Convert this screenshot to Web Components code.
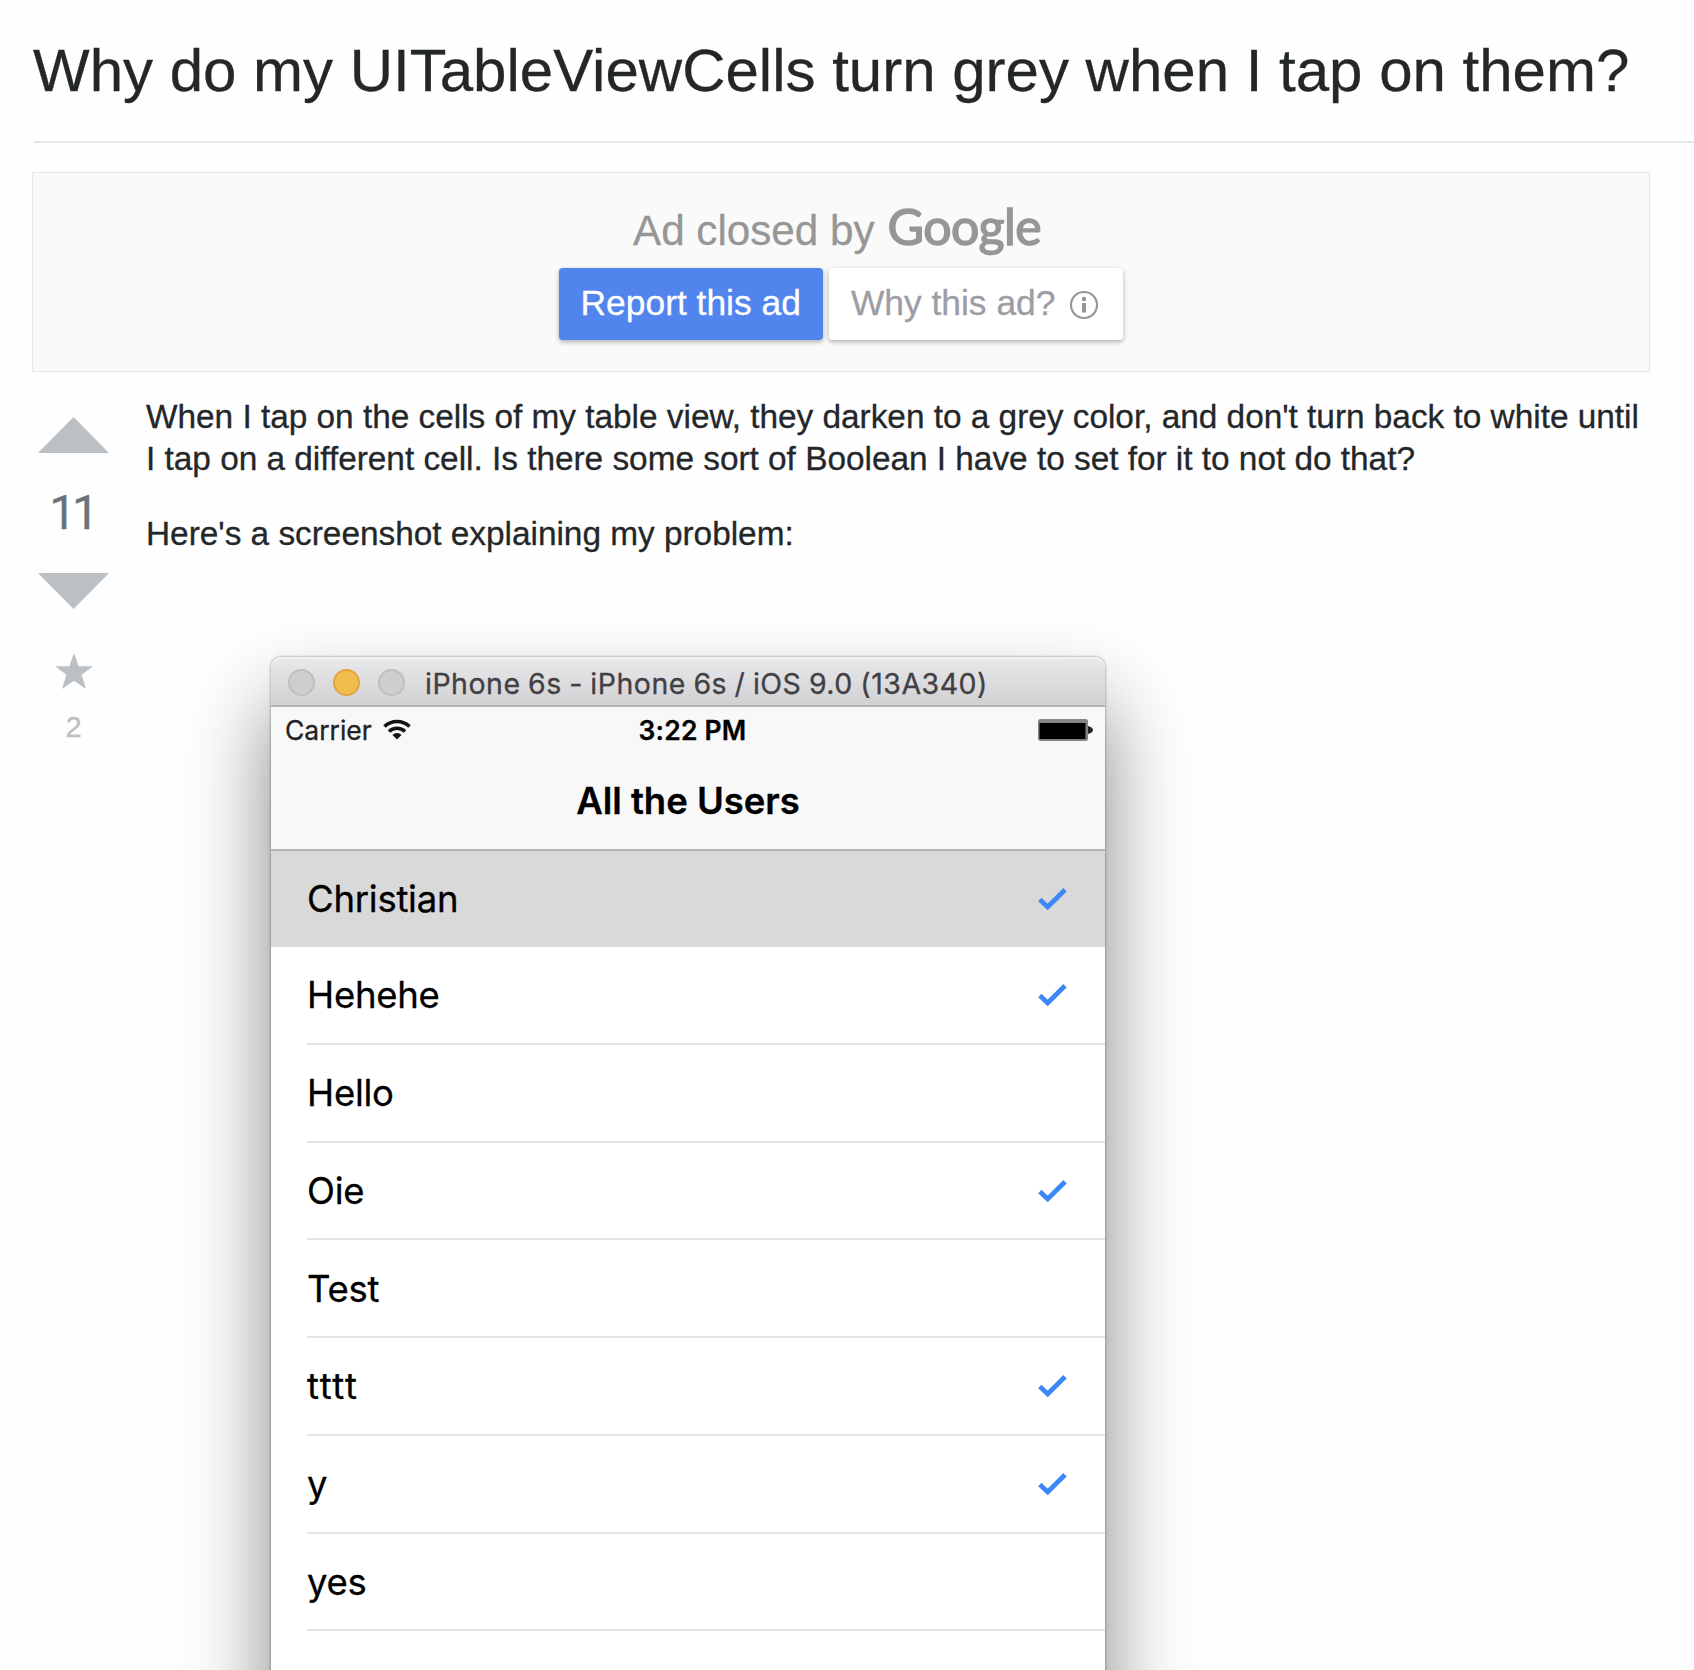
<!DOCTYPE html>
<html lang="en">
<head>
<meta charset="utf-8">
<title>Why do my UITableViewCells turn grey when I tap on them?</title>
<style>
html, body {
  margin: 0;
  height: 1670px;
  overflow: hidden;
  background: #fefefe;
}
body {
  font-family: "Liberation Sans", Arial, sans-serif;
  color: #242729;
  -webkit-text-stroke: .3px;
}
.wide {
  letter-spacing: 1.6px;
}
</style>
</head>
<body>

<question-page>
  <span slot="title">Why do my UITableViewCells turn grey when I tap on them?</span>
  <closed-ad slot="ad"></closed-ad>
  <vote-cell slot="votes" score="11" favorites="2"></vote-cell>
  <post-text slot="post">
    <p>When I tap on the cells of my table view, they darken to a grey color, and don't turn back to white until<br>I tap on a different cell. Is there some sort of Boolean I have to set for it to not do that?</p>
    <p>Here's a screenshot explaining my problem:</p>
    <simulator-window slot="figure" label="iPhone 6s - iPhone 6s / iOS 9.0 (13A340)">
      <status-bar carrier="Carrier" time="3:22 PM"></status-bar>
      <nav-bar>All the Users</nav-bar>
      <user-row selected checked>Christian</user-row>
      <user-row checked>Hehehe</user-row>
      <user-row>Hello</user-row>
      <user-row checked>Oie</user-row>
      <user-row>Test</user-row>
      <user-row checked class="wide">tttt</user-row>
      <user-row checked>y</user-row>
      <user-row>yes</user-row>
    </simulator-window>
  </post-text>
</question-page>

<script>
/**
 * Creates a template element from a string of markup.
 *
 * @param {string} html - The markup.
 * @returns {HTMLTemplateElement} - The template.
 */
const createTemplate = (html) => {
  const template = document.createElement('template')
  template.innerHTML = html
  return template
}

/**
 * Base class that attaches the shadow root and clones the template.
 */
class BaseElement extends HTMLElement {
  /**
   * Creates an instance of the current type.
   *
   * @param {HTMLTemplateElement} template - The template to clone.
   */
  constructor (template) {
    super()
    this.attachShadow({ mode: 'open' })
      .appendChild(template.content.cloneNode(true))
  }

  /**
   * Writes an attribute value as text in the shadow root.
   *
   * @param {string} selector - The element to write to.
   * @param {string} name - The name of the attribute.
   */
  writeAttribute (selector, name) {
    this.shadowRoot.querySelector(selector).textContent = this.getAttribute(name)
  }
}

const questionTemplate = createTemplate(`
<style>
:host {
  display: block;
  box-sizing: border-box;
  height: 1670px;
  padding-left: 34px;
  overflow: hidden;
}
h1 {
  margin: 0;
  padding: 36px 0 35px;
  border-bottom: 2px solid #e4e6e8;
  font-size: 60px;
  font-weight: normal;
  line-height: 70px;
  text-indent: -1px;
  white-space: nowrap;
}
.ad {
  margin: 29px 44px 0 -2px;
}
.question {
  display: grid;
  grid-template-columns: 79px 1fr;
  column-gap: 33px;
}
</style>
<h1><slot name="title"></slot></h1>
<div class="ad"><slot name="ad"></slot></div>
<div class="question">
  <slot name="votes"></slot>
  <slot name="post"></slot>
</div>
`)

customElements.define('question-page',
  /**
   * Represents a question-page element.
   */
  class extends BaseElement {
    constructor () {
      super(questionTemplate)
    }
  })

const adTemplate = createTemplate(`
<style>
:host {
  display: flex;
  flex-direction: column;
  align-items: center;
  box-sizing: border-box;
  height: 200px;
  padding-top: 23px;
  border: 1px solid #e6e6e6;
  background: #fafafa;
}
.closed {
  display: flex;
  align-items: baseline;
  gap: 13px;
  height: 72px;
  margin-right: 8px;
  color: #969696;
  font-size: 42.2px;
  line-height: 60px;
}
.logo {
  font: 50px/60px Lato, sans-serif;
  letter-spacing: -0.6px;
  -webkit-text-stroke: 1.500px;
}
.buttons {
  display: flex;
  gap: 6px;
}
.button {
  display: flex;
  align-items: center;
  box-sizing: border-box;
  height: 72px;
  padding: 0 22px 2px;
  border-radius: 4px;
  background: #fff;
  box-shadow: 0 2px 5px rgba(0, 0, 0, .3);
  color: #9d9da5;
  font-size: 35.4px;
  white-space: nowrap;
}
.report {
  background: #5284ee;
  color: #fff;
}
svg {
  width: 30px;
  height: 30px;
  margin: 4px 2px 0 14px;
}
</style>
<div class="closed"><span>Ad closed by</span><span class="logo">Google</span></div>
<div class="buttons">
  <div class="button report">Report this ad</div>
  <div class="button">Why this ad?
    <svg viewBox="0 0 30 30" fill="none" stroke="#969696">
      <circle cx="15" cy="15" r="13" stroke-width="2.2"/>
      <path d="M15 13v9.500" stroke-width="4"/>
      <circle cx="15" cy="9" r="2.200" fill="#969696" stroke="none"/>
    </svg>
  </div>
</div>
`)

customElements.define('closed-ad',
  /**
   * Represents a closed-ad element.
   */
  class extends BaseElement {
    constructor () {
      super(adTemplate)
    }
  })

const voteTemplate = createTemplate(`
<style>
:host {
  display: flex;
  flex-direction: column;
  align-items: center;
  padding-top: 45px;
  color: #6a737c;
}
svg {
  display: block;
  fill: #bbc0c4;
}
.score {
  margin: 30px 3px 29px 0;
  font-family: Roboto, sans-serif;
  font-size: 47.500px;
  letter-spacing: -4px;
  line-height: 61px;
}
.star {
  margin-top: 44px;
}
.favorites {
  margin-top: 21px;
  color: #bbc0c4;
  font-size: 29px;
  line-height: 34px;
}
</style>
<svg width="71" height="36" viewBox="0 0 71 36"><path d="M0 36L35.500 0L71 36z"/></svg>
<div class="score"></div>
<svg width="71" height="36" viewBox="0 0 71 36"><path d="M0 0h71L35.500 36z"/></svg>
<svg class="star" width="38" height="36" viewBox="0 0 38 36"><path d="M19 0l4.600 13.300H38L26.600 21.800L31 36L19 27.700L7 36l4.400-14.200L0 13.300h14.400z"/></svg>
<div class="favorites"></div>
`)

customElements.define('vote-cell',
  /**
   * Represents a vote-cell element.
   */
  class extends BaseElement {
    constructor () {
      super(voteTemplate)
    }

    /**
     * Called after the element is inserted into the DOM.
     */
    connectedCallback () {
      this.writeAttribute('.score', 'score')
      this.writeAttribute('.favorites', 'favorites')
    }
  })

const postTemplate = createTemplate(`
<style>
:host {
  display: block;
  padding-top: 24px;
  font-size: 33.400px;
  letter-spacing: -0.02px;
  line-height: 42px;
}
::slotted(p) {
  margin: 0 0 33px;
  white-space: nowrap;
}
.figure {
  padding: 69px 0 0 125px;
}
</style>
<slot></slot>
<div class="figure"><slot name="figure"></slot></div>
`)

customElements.define('post-text',
  /**
   * Represents a post-text element.
   */
  class extends BaseElement {
    constructor () {
      super(postTemplate)
    }
  })

const windowTemplate = createTemplate(`
<style>
:host {
  display: block;
  width: 834px;
  height: 1200px;
  border-radius: 10px 10px 0 0;
  background: #fff;
  box-shadow: 0 0 2px 1px rgba(0, 0, 0, .22), 0 48px 84px rgba(0, 0, 0, .48);
  color: #000;
  font-family: Inter, Roboto, sans-serif;
}
.bar {
  display: flex;
  align-items: center;
  gap: 18px;
  box-sizing: border-box;
  height: 50px;
  padding: 2px 0 0 17px;
  border-bottom: 2px solid #b4b4b5;
  border-radius: 10px 10px 0 0;
  background: linear-gradient(#e9e8ea, #d1d0d2);
  box-shadow: inset 0 2px 0 #f2f2f3;
}
i {
  box-sizing: border-box;
  width: 27px;
  height: 27px;
  border: 2px solid #bfbfbf;
  border-radius: 50%;
  background: #cecece;
}
.minimize {
  border-color: #dfa540;
  background: #f1bd4c;
}
.label {
  margin-left: 2px;
  padding-top: 3px;
  color: #414044;
  font-size: 28.5px;
  letter-spacing: .5px;
  word-spacing: -1px;
  line-height: 34px;
  white-space: nowrap;
}
</style>
<div class="bar">
  <i></i><i class="minimize"></i><i></i>
  <span class="label"></span>
</div>
<slot></slot>
`)

customElements.define('simulator-window',
  /**
   * Represents a simulator-window element.
   */
  class extends BaseElement {
    constructor () {
      super(windowTemplate)
    }

    /**
     * Called after the element is inserted into the DOM.
     */
    connectedCallback () {
      this.writeAttribute('.label', 'label')
    }
  })

const statusTemplate = createTemplate(`
<style>
:host {
  display: grid;
  grid-template-columns: 1fr auto 1fr;
  align-items: center;
  box-sizing: border-box;
  height: 44px;
  padding: 1px 12px 0 14px;
  background: #f8f8f8;
  font-size: 26.500px;
  line-height: 32px;
}
.left {
  display: flex;
  align-items: center;
  gap: 11px;
  color: #222;
}
.time {
  margin-left: 7px;
  font-weight: 600;
  letter-spacing: .2px;
}
.battery {
  justify-self: end;
}
</style>
<div class="left">
  <span class="carrier"></span>
  <svg width="28" height="21" viewBox="0 0 28 21" fill="none" stroke="#111" stroke-width="3.600">
    <path d="M1.500 7.500a18 18 0 0 1 25 0"/>
    <path d="M6 12.500a11.500 11.500 0 0 1 16 0"/>
    <path d="M14 20.500l-4.500-4.600a6.500 6.500 0 0 1 9 0z" fill="#111" stroke="none"/>
  </svg>
</div>
<span class="time"></span>
<svg class="battery" width="55" height="22" viewBox="0 0 55 22">
  <rect x="0" y="0" width="50" height="22" rx="2.500" fill="#858585"/>
  <rect x="1.500" y="4" width="46" height="16" fill="#000"/>
  <path d="M50 7q5 1.500 5 4t-5 4z" fill="#222"/>
</svg>
`)

customElements.define('status-bar',
  /**
   * Represents a status-bar element.
   */
  class extends BaseElement {
    constructor () {
      super(statusTemplate)
    }

    /**
     * Called after the element is inserted into the DOM.
     */
    connectedCallback () {
      this.writeAttribute('.carrier', 'carrier')
      this.writeAttribute('.time', 'time')
    }
  })

const navTemplate = createTemplate(`
<style>
:host {
  display: flex;
  justify-content: center;
  align-items: center;
  box-sizing: border-box;
  height: 100px;
  padding-top: 2px;
  border-bottom: 2px solid #b2b2b2;
  background: #f8f8f8;
  font-size: 36.500px;
  font-weight: 600;
}
</style>
<slot></slot>
`)

customElements.define('nav-bar',
  /**
   * Represents a nav-bar element.
   */
  class extends BaseElement {
    constructor () {
      super(navTemplate)
    }
  })

const rowTemplate = createTemplate(`
<style>
:host {
  display: block;
  padding-left: 36px;
  font-size: 36.500px;
  letter-spacing: -0.25px;
}
:host([selected]) {
  background: #d9d9d9;
}
.cell {
  display: flex;
  justify-content: space-between;
  align-items: center;
  box-sizing: border-box;
  height: 97.750px;
  padding: 1px 38px 0 0;
  border-bottom: 2px solid #e4e4e5;
}
:host([selected]) .cell {
  height: 96px;
  border-color: #d9d9d9;
}
svg {
  display: none;
}
:host([checked]) svg {
  display: block;
}
</style>
<div class="cell">
  <span><slot></slot></span>
  <svg width="29" height="24" viewBox="0 0 29 24" fill="none" stroke="#3c88f8" stroke-width="4.800">
    <path d="M1.800 12.500L9.700 20L27 2.700"/>
  </svg>
</div>
`)

customElements.define('user-row',
  /**
   * Represents a user-row element.
   */
  class extends BaseElement {
    constructor () {
      super(rowTemplate)
    }
  })
</script>
</body>
</html>
